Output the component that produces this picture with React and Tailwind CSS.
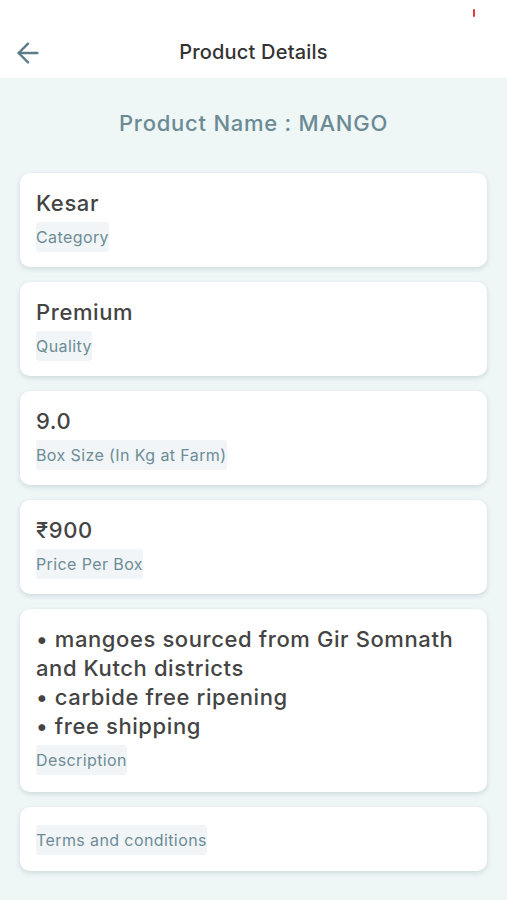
import React from 'react';
import { ArrowLeft } from 'lucide-react';

const details = [
  { value: 'Kesar', label: 'Category' },
  { value: 'Premium', label: 'Quality' },
  { value: '9.0', label: 'Box Size (In Kg at Farm)' },
  { value: '₹900', label: 'Price Per Box' },
];

const description = [
  '• mangoes sourced from Gir Somnath and Kutch districts',
  '• carbide free ripening',
  '• free shipping',
];

const Label = ({ children }) => (
  <span className="inline-block bg-[#f1f5f7] px-0 text-[16px] leading-[30px] tracking-[0.4px] text-[#6d8c96] rounded-[3px]">
    {children}
  </span>
);

const Card = ({ children, className = '' }) => (
  <div className={`bg-white rounded-[10px] shadow-[0_2px_5px_rgba(90,120,130,0.22)] px-4 ${className}`}>
    {children}
  </div>
);

export default function App() {
  return (
    <div className="min-h-[900px] bg-[#eef6f6] font-['Inter','Liberation_Sans',sans-serif]">
      {/* Header */}
      <div className="relative h-[78px] bg-white flex items-center justify-center pt-[26px]">
        <span className="absolute left-[473px] top-[9px] w-[2px] h-[8px] bg-[#e53935] rounded-sm"></span>
        <button className="absolute left-[12px] top-[37px] text-[#5d7b88]">
          <ArrowLeft className="w-[32px] h-[32px]" strokeWidth={1.8} />
        </button>
        <h1 className="text-[20px] font-medium tracking-[0.2px] text-[#333]">Product Details</h1>
      </div>

      {/* Product name */}
      <div className="pt-[30px] pb-[35px] text-center">
        <h2 className="text-[22px] leading-[30px] font-medium tracking-[0.75px] text-[#6b8a94]">Product Name : MANGO</h2>
      </div>

      <div className="flex flex-col gap-[15px] px-[20px] pb-8">
        {details.map((d) => (
          <Card key={d.label} className="pt-[16px] pb-[15px]">
            <div className="text-[22px] leading-[28px] font-medium tracking-[0.6px] text-[#444] mb-[5px]">{d.value}</div>
            <Label>{d.label}</Label>
          </Card>
        ))}

        <Card className="pt-[16px] pb-[17px]">
          <div className="text-[22px] leading-[29px] font-medium tracking-[0.6px] text-[#444] mb-[4px]">
            {description.map((line) => (
              <div key={line}>{line}</div>
            ))}
          </div>
          <Label>Description</Label>
        </Card>

        <Card className="pt-[18px] pb-[16px]">
          <Label>Terms and conditions</Label>
        </Card>
      </div>
    </div>
  );
}
